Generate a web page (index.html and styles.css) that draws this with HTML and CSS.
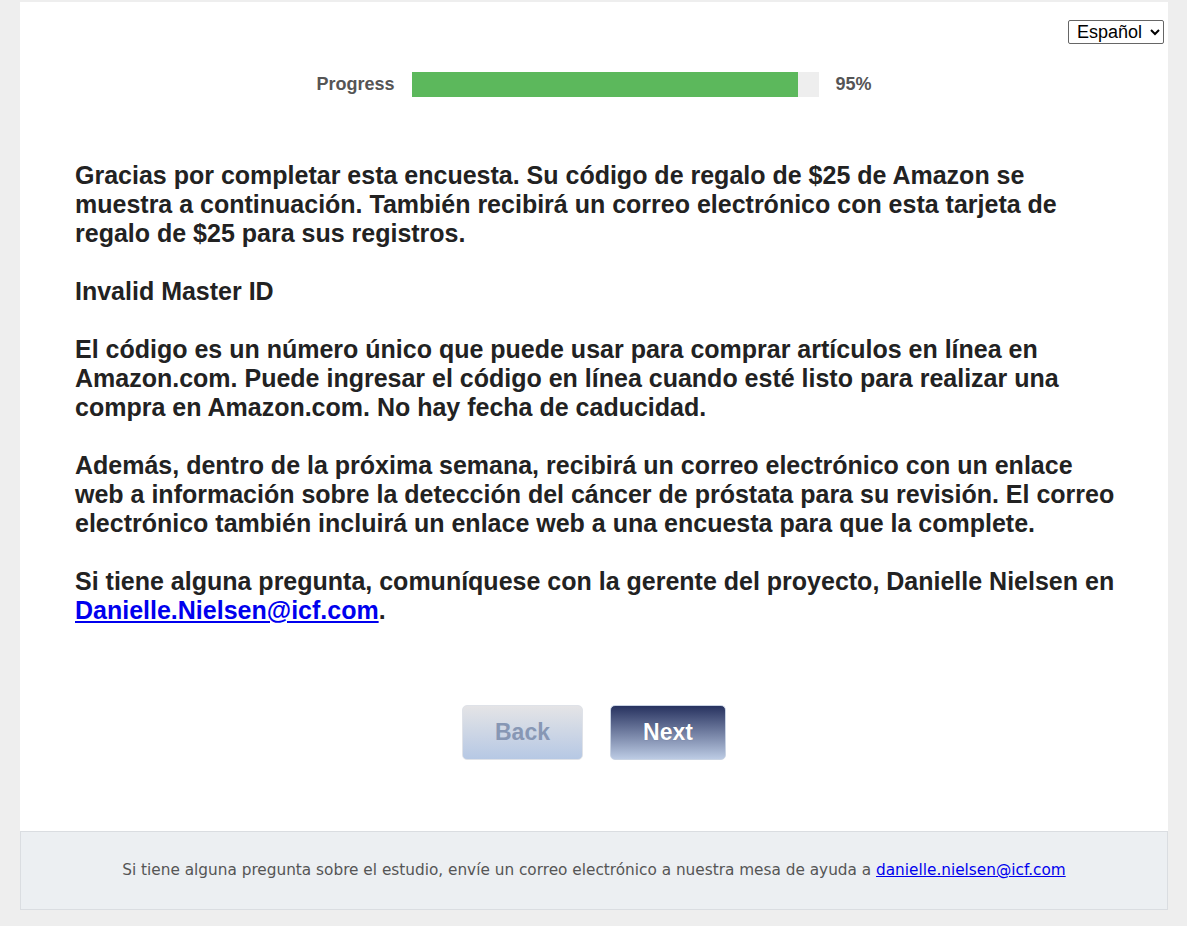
FILE: index.html
```html
<!DOCTYPE html>
<html lang="es">
<head>
    <meta charset="UTF-8">
    <meta name="viewport" content="width=device-width, initial-scale=1.0">
    <title>Encuesta</title>
    <link rel="stylesheet" href="styles.css">
</head>
<body>
    <div class="page">
        <div class="survey">
            <div class="lang-bar">
                <select class="lang-select">
                    <option>Español</option>
                    <option>English</option>
                </select>
            </div>

            <div class="progress-row">
                <span class="progress-label">Progress</span>
                <div class="progress-track">
                    <div class="progress-fill" style="width: 95%"></div>
                </div>
                <span class="progress-value">95%</span>
            </div>

            <div class="message">
                <p>Gracias por completar esta encuesta. Su código de regalo de $25 de Amazon se muestra a continuación. También recibirá un correo electrónico con esta tarjeta de regalo de $25 para sus registros.</p>
                <p>Invalid Master ID</p>
                <p>El código es un número único que puede usar para comprar artículos en línea en Amazon.com. Puede ingresar el código en línea cuando esté listo para realizar una compra en Amazon.com. No hay fecha de caducidad.</p>
                <p>Además, dentro de la próxima semana, recibirá un correo electrónico con un enlace web a información sobre la detección del cáncer de próstata para su revisión. El correo electrónico también incluirá un enlace web a una encuesta para que la complete.</p>
                <p>Si tiene alguna pregunta, comuníquese con la gerente del proyecto, Danielle Nielsen en <a href="mailto:Danielle.Nielsen@icf.com">Danielle.Nielsen@icf.com</a>.</p>
            </div>

            <div class="nav-buttons">
                <button class="btn btn-back" disabled>Back</button>
                <button class="btn btn-next">Next</button>
            </div>
        </div>

        <div class="footer">
            Si tiene alguna pregunta sobre el estudio, envíe un correo electrónico a nuestra mesa de ayuda a <a href="mailto:danielle.nielsen@icf.com">danielle.nielsen@icf.com</a>
        </div>
    </div>
</body>
</html>
```

FILE: styles.css
```css
body {
    margin: 0;
    background-color: #eeeeee;
    font-family: "Liberation Sans", Arial, sans-serif;
    color: #222;
}
.page {
    margin: 2px 19px 17px 20px;
}
.survey {
    background-color: #fff;
    padding: 18px 4px 71px 55px;
}
.lang-bar {
    display: flex;
    justify-content: flex-end;
}
.lang-select {
    font-family: "Liberation Sans", Arial, sans-serif;
    font-size: 18px;
    color: #000;
    height: 24px;
    width: 96px;
    border: 1px solid #666;
    border-radius: 2px;
    background-color: #fff;
    padding: 0 0 0 4px;
}
.progress-row {
    display: flex;
    align-items: center;
    justify-content: center;
    gap: 17px;
    margin: 28px 51px 0 0;
}
.progress-label,
.progress-value {
    font-size: 18px;
    font-weight: bold;
    color: #555;
}
.progress-track {
    width: 407px;
    height: 25px;
    background-color: #eeeeee;
}
.progress-fill {
    height: 100%;
    background-color: #5cb85c;
}
.message {
    margin-top: 64px;
    padding-right: 38px;
    font-size: 25px;
    font-weight: bold;
    line-height: 29px;
    color: #222;
}
.message p {
    margin: 0 0 29px;
}
.message a {
    color: #0000ee;
}
.nav-buttons {
    display: flex;
    justify-content: center;
    gap: 27px;
    margin: 80px 51px 0 0;
}
.btn {
    height: 55px;
    border-radius: 5px;
    font-family: "Liberation Sans", Arial, sans-serif;
    font-size: 23px;
    font-weight: bold;
    cursor: pointer;
}
.btn-back {
    width: 121px;
    color: #8797b4;
    border: 1px solid #dfe2e8;
    background: linear-gradient(to bottom, #e4e4e6, #b6c8e4);
}
.btn-next {
    width: 116px;
    color: #fff;
    border: 1px solid #c9d3e3;
    background: linear-gradient(to bottom, #27325f, #bccbe4);
    text-shadow: 0 0 1px rgba(0, 0, 0, 0.3);
}
.footer {
    background-color: #eceff2;
    border: 1px solid #dadde1;
    height: 77px;
    line-height: 77px;
    text-align: center;
    font-family: "DejaVu Sans", Tahoma, sans-serif;
    font-size: 15.3px;
    color: #555;
}
.footer a {
    color: #0000ee;
}
```
